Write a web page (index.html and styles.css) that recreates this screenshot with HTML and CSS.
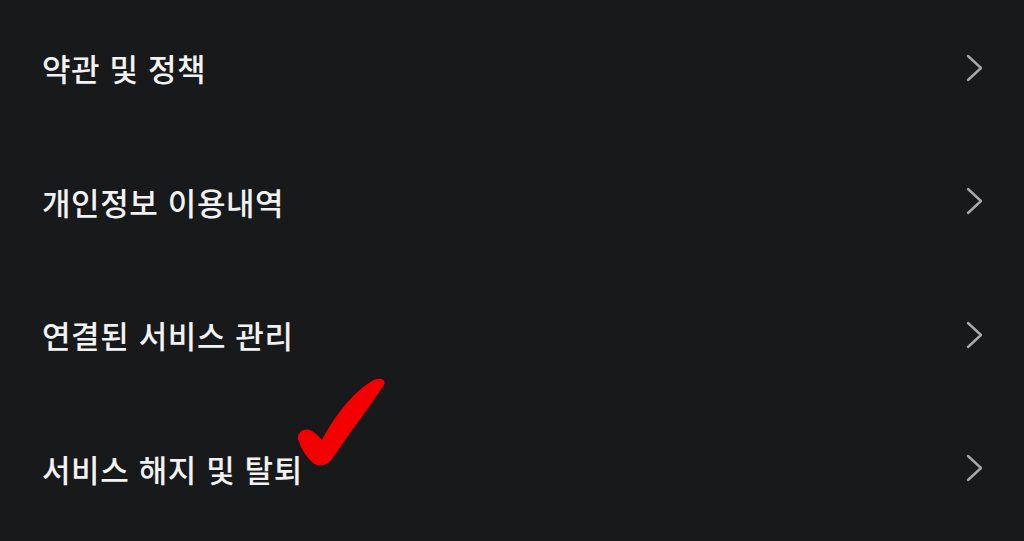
FILE: index.html
```html
<!DOCTYPE html>
<html lang="ko">
  <head>
    <title>설정</title>
    <meta charset="utf-8" />
    <meta name="viewport" content="width=device-width, initial-scale=1" />
    <link rel="stylesheet" href="styles.css">
  </head>

  <body>
    <ul class="menu">
      <li class="menu-item">
        <span class="label">약관 및 정책</span>
        <svg class="chevron" viewBox="0 0 18 28"><path d="M2 2 L15 14 L2 26" /></svg>
      </li>
      <li class="menu-item">
        <span class="label">개인정보 이용내역</span>
        <svg class="chevron" viewBox="0 0 18 28"><path d="M2 2 L15 14 L2 26" /></svg>
      </li>
      <li class="menu-item">
        <span class="label">연결된 서비스 관리</span>
        <svg class="chevron" viewBox="0 0 18 28"><path d="M2 2 L15 14 L2 26" /></svg>
      </li>
      <li class="menu-item">
        <span class="label">서비스 해지 및 탈퇴</span>
        <svg class="chevron" viewBox="0 0 18 28"><path d="M2 2 L15 14 L2 26" /></svg>
      </li>
    </ul>

    <!-- red check mark drawn over the last row -->
    <svg class="check" viewBox="0 0 90 95">
      <path d="M2 64 C1 57 8 53 14 55 C19 57 23 62 26 65 C38 42 56 18 76 6 C82 2 91 3 88 10 C72 34 52 60 36 84 C31 91 22 92 17 88 C12 84 5 74 2 64 Z" />
    </svg>
  </body>
</html>
```

FILE: styles.css
```css
html,
body {
  margin: 0;
  height: 100%;
  background: #17191b;
}

body {
  font-family: "Noto Sans CJK KR", "Noto Sans", sans-serif;
  color: #f2f2f2;
  position: relative;
  overflow: hidden;
}

.menu {
  list-style: none;
  margin: 0;
  padding: 1px 0 0;
}

.menu-item {
  display: flex;
  align-items: center;
  justify-content: space-between;
  height: 133.5px;
  padding: 0 40px 0 42px;
}

.label {
  font-size: 31px;
  font-weight: 500;
  letter-spacing: 0.6px;
}

.chevron {
  width: 18px;
  height: 28px;
}

.chevron path {
  fill: none;
  stroke: #a9a9a9;
  stroke-width: 2.4;
  stroke-linecap: round;
  stroke-linejoin: round;
}

.check {
  position: absolute;
  left: 296px;
  top: 375px;
  width: 90px;
  height: 95px;
}

.check path {
  fill: #f40000;
}
```
